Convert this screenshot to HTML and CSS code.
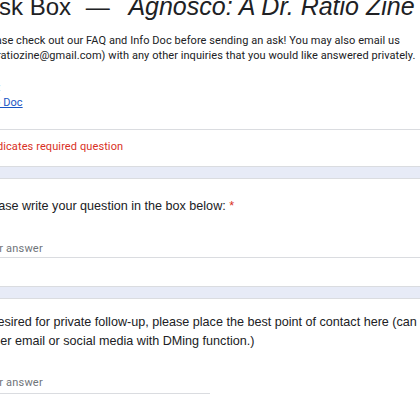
FILE: index.html
```html
<!DOCTYPE html>
<html>
<head>
<meta charset="utf-8">
<link rel="stylesheet" href="styles.css">
</head>
<body>
<div class="page">
  <section class="card header-card">
    <h1 class="title">Ask Box <span class="dash">—</span> <em>Agnosco: A Dr. Ratio Zine</em></h1>
    <p class="desc"><span class="line">Please check out our FAQ and Info Doc before sending an ask! You may also email us</span><span class="line second">(drratiozine@gmail.com) with any other inquiries that you would like answered privately.</span></p>
    <p class="desc links"><span class="faq">FAQ:</span><br><a href="#" class="link">Info Doc</a></p>
    <div class="divider"></div>
    <p class="required">* Indicates required question</p>
  </section>
  <section class="card question-card">
    <p class="question">Please write your question in the box below: <span class="star">*</span></p>
    <div class="answer full">Your answer</div>
  </section>
  <section class="card question-card q2">
    <p class="question">If desired for private follow-up, please place the best point of contact here (can be<br>either email or social media with DMing function.)</p>
    <div class="answer short">Your answer</div>
  </section>
</div>
</body>
</html>
```
FILE: styles.css
```css
html, body {
  margin: 0;
  padding: 0;
  width: 420px;
  height: 420px;
  overflow: hidden;
  background: #e7ebf7;
}

.page {
  margin: 0 0 0 -20px;
  width: 480px;
  display: flex;
  flex-direction: column;
  gap: 11px;
}

.card {
  background: #fff;
  border: 1px solid #dadce0;
  border-left: none;
  border-right: none;
  color: #202124;
}

.header-card {
  border-top: none;
  padding-bottom: 12px;
}

.title {
  margin: -8px 0 0 3px;
  font-family: "Liberation Sans", Arial, sans-serif;
  font-weight: normal;
  font-size: 24px;
  line-height: 28px;
  white-space: nowrap;
  color: #202124;
}

.dash {
  margin: 0 12px 0 8px;
}

.title em {
  font-style: italic;
  font-size: 25px;
}

.desc {
  margin: 12px 0 0 0;
  font-family: Roboto, "Liberation Sans", sans-serif;
  font-size: 11px;
  line-height: 15px;
  letter-spacing: 0.06px;
  white-space: nowrap;
  color: #202124;
}

.line {
  display: block;
}

.line.second {
  text-indent: 3px;
}

.links {
  margin-top: 17px;
}

.faq {
  color: #5f6368;
  margin-left: -2px;
}

.link {
  color: #1a56c4;
  text-decoration: underline;
  margin-left: 1px;
}

.divider {
  height: 1px;
  background: #dadce0;
  margin: 19px 0 0 -20px;
}

.required {
  margin: 9px 0 0 0;
  font-family: Roboto, "Liberation Sans", sans-serif;
  font-size: 11px;
  line-height: 15px;
  letter-spacing: 0.1px;
  color: #d93025;
}

.question-card {
  padding: 18px 0 28px 0;
}

.q2 {
  padding-top: 14px;
}

.question {
  margin: 0;
  font-family: "Liberation Sans", Arial, sans-serif;
  font-size: 12.6px;
  line-height: 19px;
  white-space: nowrap;
  color: #202124;
}

.star {
  color: #d93025;
}

.answer {
  margin-top: 25px;
  font-family: Roboto, "Liberation Sans", sans-serif;
  font-size: 11px;
  line-height: 15px;
  letter-spacing: 0.2px;
  color: #70757a;
  border-bottom: 1px solid #dadce0;
  padding-bottom: 1px;
}

.answer.full {
  width: 100%;
}

.answer.short {
  width: 230px;
  margin-top: 24px;
  padding-bottom: 3px;
}
```
